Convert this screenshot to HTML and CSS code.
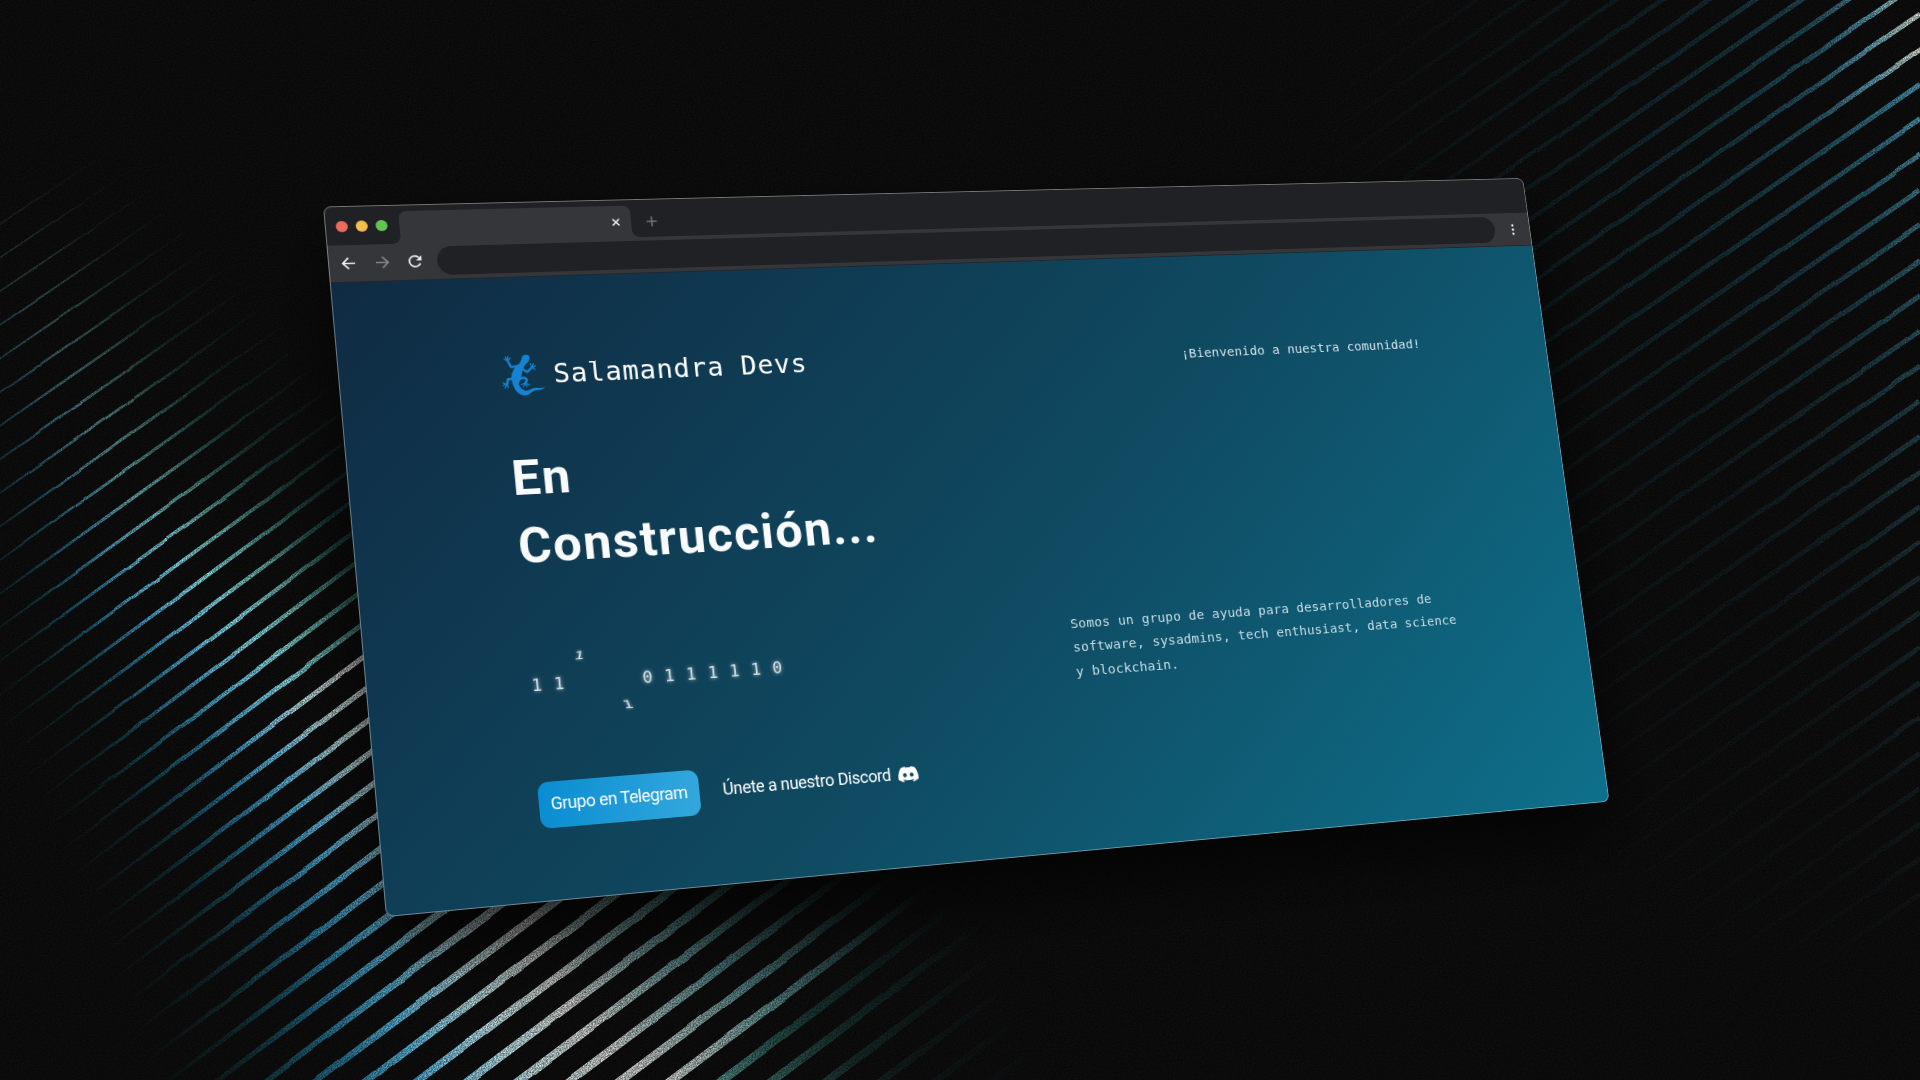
FILE: index.html
```html
<!DOCTYPE html>
<html lang="es">
<head>
<meta charset="utf-8">
<title>Salamandra Devs</title>
<link rel="stylesheet" href="styles.css">
</head>
<body>
<main class="stage">
  <svg class="backdrop" viewBox="0 0 1920 1080" aria-hidden="true">
    <defs>
      <filter id="rough" x="0" y="0" width="1920" height="1080" filterUnits="userSpaceOnUse" color-interpolation-filters="sRGB">
        <feTurbulence type="fractalNoise" baseFrequency="0.02" numOctaves="1" seed="4" result="wave"/>
        <feDisplacementMap in="SourceGraphic" in2="wave" scale="3" xChannelSelector="R" yChannelSelector="G" result="bent"/>
        <feTurbulence type="fractalNoise" baseFrequency="0.8" numOctaves="2" seed="9" result="speck"/>
        <feColorMatrix in="speck" values="0 0 0 0 1  0 0 0 0 1  0 0 0 0 1  2.2 0 0 0 -0.35" result="holes"/>
        <feComposite in="bent" in2="holes" operator="in" result="dotted"/>
        <feComposite in="bent" in2="dotted" operator="arithmetic" k1="0" k2="0.55" k3="0.45" k4="0"/>
      </filter>
      <filter id="grain" x="0" y="0" width="100%" height="100%" color-interpolation-filters="sRGB">
        <feTurbulence type="fractalNoise" baseFrequency="0.6" numOctaves="2" seed="2"/>
        <feColorMatrix values="0 0 0 0 0  0 0 0 0 0  0 0 0 0 0  1.6 0 0 0 -0.45"/>
      </filter>
    </defs>
    <g id="stripes" filter="url(#rough)"></g>
    <rect class="grain" width="1920" height="1080" filter="url(#grain)"/>
  </svg>

  <section class="window">
    <div class="tabstrip">
      <div class="lights"><i class="light red"></i><i class="light amber"></i><i class="light green"></i></div>
      <div class="tab">
        <svg class="close" viewBox="0 0 10 10"><path d="M1.5 1.5l7 7M8.5 1.5l-7 7"/></svg>
      </div>
      <svg class="plus" viewBox="0 0 12 12"><path d="M6 .5v11M.5 6h11"/></svg>
    </div>
    <div class="toolbar">
      <svg class="nav" viewBox="0 0 16 16"><path d="M15 8H2M8 1.8L1.8 8 8 14.2"/></svg>
      <svg class="nav dim" viewBox="0 0 16 16"><path d="M1 8h13M8 1.8L14.2 8 8 14.2"/></svg>
      <svg class="nav" viewBox="0 0 16 16"><path d="M13.6 10.2A6.1 6.1 0 1 1 12.4 3.7"/><path class="solid" d="M15.2 1v6H9.2z"/></svg>
      <div class="address"></div>
      <svg class="menu" viewBox="0 0 4 14"><circle cx="2" cy="2" r="1.5"/><circle cx="2" cy="7" r="1.5"/><circle cx="2" cy="12" r="1.5"/></svg>
    </div>
    <div class="page">
      <header class="header">
        <div class="brand">
          <svg class="lizard" viewBox="0 0 124 126">
            <path class="body" d="M83 9C84 0 65-2 61 8C59 16 57 22 51 28C40 37 30 50 27 66C26 76 28 84 31 96C36 112 48 125 62 125C78 124 82 112 96 109C106 108 116 110 123 98C114 105 104 102 94 102C80 104 74 112 64 110C54 106 48 98 48 88C50 80 56 70 58 60C60 46 66 34 76 26C82 20 82 14 83 9Z"/>
            <path class="limb" d="M52 36L27 38L19 20M59 44L74 54L88 40M36 74L17 75L13 91M48 78C55 69 70 70 71 79L66 88"/>
            <path class="toes" d="M19 19L9 15M19 19L13 8M19 19L20 7M19 19L27 11M88 40L84 29M88 40L93 29M88 40L99 35M88 40L97 46M13 91L1 86M13 91L1 94M13 91L7 102M13 91L17 101M66 88L55 91M66 88L60 99M66 88L71 98M66 88L78 93"/>
          </svg>
          <span class="brand-name">Salamandra Devs</span>
        </div>
        <p class="welcome">¡Bienvenido a nuestra comunidad!</p>
      </header>
      <div class="columns">
        <div class="left">
          <h1 class="title">En<br>Construcción...</h1>
          <div class="bits"><b>1</b><b>1</b><b class="up">1</b><b></b><b class="down">1</b><b>0</b><b>1</b><b>1</b><b>1</b><b>1</b><b>1</b><b>0</b></div>
          <div class="actions">
            <a class="telegram">Grupo en Telegram</a>
            <a class="discord"><span>Únete a nuestro Discord</span>
              <svg class="discord-icon" viewBox="0 0 24 18.2"><path d="M20.3 1.5A19.8 19.8 0 0 0 15.4 0c-.2.4-.5.9-.6 1.3a18.3 18.3 0 0 0-5.5 0C9.100.8 8.800.4 8.600 0a19.700 19.700 0 0 0-4.900 1.500C.5 6.200-.3 10.700.1 15.200a19.900 19.900 0 0 0 6 3c.5-.7.9-1.300 1.200-2a13 13 0 0 1-1.900-.9l.5-.4c3.900 1.800 8.200 1.800 12.100 0l.5.400c-.6.4-1.200.7-1.900.9.4.7.8 1.400 1.200 2a19.800 19.800 0 0 0 6-3c.5-5.200-.8-9.700-3.500-13.700zM8 12.500c-1.200 0-2.200-1.100-2.200-2.400S6.800 7.600 8 7.600s2.200 1.100 2.200 2.500S9.200 12.500 8 12.500zm8 0c-1.200 0-2.200-1.100-2.200-2.400s1-2.500 2.200-2.500 2.200 1.100 2.200 2.500-1 2.400-2.200 2.400z"/></svg>
            </a>
          </div>
        </div>
        <p class="about">Somos un grupo de ayuda para desarrolladores de software, sysadmins, tech enthusiast, data science y blockchain.</p>
      </div>
    </div>
  </section>
</main>
<script src="stripes.js"></script>
</body>
</html>
```
FILE: styles.css
```css
* { box-sizing: border-box; }
body { margin: 0; background: #0a0a0a; }
.stage { position: relative; width: 1920px; height: 1080px; overflow: hidden; background: #0e0e0e; }
.backdrop { display: block; width: 1920px; height: 1080px; }
.grain { opacity: .55; }

/* Browser window, tilted in perspective */
.window {
  position: absolute; left: 0; top: 0;
  width: 1360px; height: 740px;
  display: flex; flex-direction: column;
  border-radius: 8px; overflow: visible;
  transform-origin: 0 0;
  transform: matrix3d(1.032658, -.003389, 0, .0000986904, .070166, .924576, 0, -.0000387784, 0, 0, 1, 0, 323, 206.5, 0, 1);
  box-shadow: 0 40px 80px rgba(0, 0, 0, .75);
  font-family: Roboto, sans-serif;
}
.window::after {
  content: ""; position: absolute; inset: 0;
  border: 1.3px solid rgba(255, 255, 255, .38);
  border-radius: 8px;
}
.tabstrip {
  height: 42px; flex: none; display: flex; align-items: flex-end;
  background: #202124; border-radius: 8px 8px 0 0; padding-left: 11px;
}
.lights { display: flex; gap: 8px; width: 64px; height: 42px; align-items: center; padding-top: 1px; }
.light { width: 12px; height: 12px; border-radius: 50%; }
.red { background: #ed6a5e; }
.amber { background: #f5bd4f; }
.green { background: #61c554; }
.tab {
  position: relative; width: 240px; height: 35px;
  display: flex; align-items: center; justify-content: flex-end; padding-right: 11px;
  background: #35363a; border-radius: 8px 8px 0 0;
}
.tab::before, .tab::after { content: ""; position: absolute; bottom: 0; width: 8px; height: 8px; }
.tab::before { left: -8px; background: radial-gradient(circle at 0 0, transparent 7.5px, #35363a 8px); }
.tab::after { right: -8px; background: radial-gradient(circle at 100% 0, transparent 7.5px, #35363a 8px); }
svg path { fill: none; }
.close { width: 10px; height: 10px; stroke: #f1f1f1; stroke-width: 1.6; }
.plus { width: 12px; height: 12px; margin: 0 0 11px 16px; stroke: #75767a; stroke-width: 1.5; }
.toolbar {
  height: 40px; flex: none; display: flex; align-items: center;
  background: #35363a; padding: 0 20px 0 13px; border-bottom: 1px solid #24262a;
}
.nav { width: 15px; height: 15px; margin-right: 18.5px; stroke: #f1f1f1; stroke-width: 1.8; }
.nav.dim { stroke: #85868a; }
.nav .solid { fill: #f1f1f1; stroke: none; }
.nav + .address { margin-left: -4px; }
.address { width: 1205px; height: 31px; border-radius: 16px; background: #202124; }
.menu { width: 4px; height: 14px; margin-left: auto; fill: #f1f1f1; }

.page {
  flex: 1; padding: 83px 157px 0 165px;
  background: linear-gradient(135deg, #0f2b43 0%, #0f4a61 52%, #0e708b 100%);
  border-radius: 0 0 8px 8px;
}
.header { display: flex; justify-content: space-between; height: 44px; align-items: center; }
.brand { display: flex; align-items: center; gap: 9px; }
.lizard { width: 44px; height: 45px; transform: rotate(2deg); }
.lizard .body { fill: #1583cf; }
.lizard .limb, .lizard .toes { stroke: #1583cf; stroke-width: 7; stroke-linejoin: round; stroke-linecap: round; }
.lizard .toes { stroke-width: 3.5; }
.brand-name, .welcome, .about, .bits { font-family: "DejaVu Sans Mono", monospace; }
.brand-name { font-size: 28.5px; letter-spacing: .85px; color: #fff; line-height: 44px; margin-top: 1px; }
.welcome { margin: 14px 1px 0 0; font-size: 14.8px; letter-spacing: .15px; line-height: 24px; color: #d3e2ea; }
.columns { display: flex; justify-content: space-between; }
.title {
  margin: 53px 0 0; font-size: 52px; line-height: 72px; font-weight: 700;
  letter-spacing: 1.6px; color: #f8fafc;
}
.bits { display: flex; margin: 95px 0 0 -2px; height: 30px; }
.bits b {
  width: 22.8px; font-size: 17.5px; line-height: 30px; font-weight: 400; color: #d3dfe4;
  text-shadow: 0 0 4px rgba(255, 255, 255, .7); padding-left: 2px;
}
.bits .up { transform: translateY(-28px) skewX(-14deg) scaleY(.65); }
.bits .down { transform: translateY(27px) skewX(14deg) scaleY(.68); }
.actions { display: flex; margin: 86px 0 0 -4px; align-items: flex-start; }
.telegram {
  width: 164.5px; height: 47.5px; border-radius: 11px; text-align: center;
  background: linear-gradient(100deg, #088cd1, #34a8dd);
  color: #fff; font-size: 17.6px; line-height: 46px; letter-spacing: -.45px;
}
.discord {
  display: flex; align-items: center; margin-left: 25px; gap: 8px; height: 46px;
  color: #fff; font-size: 17.6px; letter-spacing: -.34px;
}
.discord-icon { width: 22px; height: 17px; }
.discord-icon path { fill: #fff; }
.about {
  width: 460px; margin: 269px -4px 0 0; font-size: 14.8px; letter-spacing: .18px;
  line-height: 26.4px; color: #c9dde6;
}
```
FILE: stripes.js
```js
// Draws the two fans of light streaks behind the window.
const NS = "http://www.w3.org/2000/svg";
const group = document.getElementById("stripes");
let count = 0;

function lerp(table, x) {
  for (let i = 1; i < table.length; i++) {
    const [x0, y0] = table[i - 1], [x1, y1] = table[i];
    if (x <= x1) return y0 + (y1 - y0) * Math.max(0, (x - x0) / (x1 - x0));
  }
  return table[table.length - 1][1];
}

function streak(x0, y0, x1, y1, widths, stops, opacity) {
  const id = "s" + count++;
  const g = document.createElementNS(NS, "linearGradient");
  g.id = id;
  g.setAttribute("gradientUnits", "userSpaceOnUse");
  Object.entries({ x1: x0, y1: y0, x2: x1, y2: y1 }).forEach(([k, v]) => g.setAttribute(k, v));
  stops.forEach(([offset, color, alpha]) => {
    const s = document.createElementNS(NS, "stop");
    s.setAttribute("offset", offset);
    s.setAttribute("stop-color", color);
    s.setAttribute("stop-opacity", alpha);
    g.append(s);
  });
  const p = document.createElementNS(NS, "polygon");
  const len = Math.hypot(x1 - x0, y1 - y0), nx = -(y1 - y0) / len / 2, ny = (x1 - x0) / len / 2;
  const side = sign => widths.map((w, i) => {
    const t = i / (widths.length - 1);
    return `${x0 + (x1 - x0) * t + nx * w * sign},${y0 + (y1 - y0) * t + ny * w * sign}`;
  });
  p.setAttribute("points", side(1).concat(side(-1).reverse()).join(" "));
  p.setAttribute("fill", `url(#${id})`);
  p.setAttribute("opacity", opacity);
  group.append(g, p);
}

// Left fan: c is the height at which a streak meets the left edge.
for (let c = 224; c < 1950; c += c < 1090 ? 33.6 : c < 1280 ? 36.5 : c < 1640 ? 38 : 41) {
  const slope = lerp([[200, .66], [600, .72], [850, .75], [2000, .75]], c);
  const peak = lerp([[226, 0], [450, 80], [620, 145], [820, 250], [1025, 350], [1200, 430], [1350, 470], [1500, 530], [1650, 660], [1950, 900]], c);
  const half = lerp([[226, 150], [500, 180], [800, 215], [1100, 260], [1500, 340], [1650, 330], [1950, 200]], c);
  const power = lerp([[226, .12], [330, .32], [560, .65], [700, 1], [1600, 1], [1680, .7], [1740, .42], [1840, .25], [1950, .08]], c);
  const w = lerp([[226, 1.6], [620, 3.4], [850, 4.6], [1050, 6], [1300, 8.2], [1600, 8.6], [1950, 6.5]], c);
  const white = c > 900 && c < 1600;
  const a = peak - half, b = peak + half;
  streak(a, c - slope * a, b, c - slope * b, [w * .4, w * .75, w, w, w * .75], [
    [0, "#0b4a52", 0], [.14, "#14525e", .4], [.3, "#2f8cb4", .85], [.4, "#5cbee4", 1],
    [.5, white ? "#c4ecf2" : "#8ceaf4", 1], [.6, white ? "#dde0dc" : "#7cd8d0", white ? 1 : .85],
    [.76, white ? "#6aa6aa" : "#2b7a74", white ? .8 : .45], [1, "#0b4a52", 0]
  ], power);
}

// Right fan: c is the height at which a streak meets the right edge.
for (let c = -370; c < 920; c += c < 0 ? 32 : 35.2) {
  const reach = lerp([[-370, 640], [0, 620], [400, 500], [700, 330], [920, 180]], c);
  const power = lerp([[-370, .15], [-100, .85], [10, 1], [100, .9], [250, .55], [420, .36], [600, .22], [900, .06]], c);
  const hot = c > -120 && c < 60;
  const mid = lerp([[-370, .6], [-60, .4], [300, .4], [900, .6]], c);
  streak(1920 - reach, c + .69 * reach, 1920, c, [3, 4.5, 5], [
    [0, "#0b3a40", 0], [.35, "#12404a", mid], [.65, "#1d5060", .65], [.82, "#2e7086", .75],
    [.92, hot ? "#6cb8d4" : "#3b8ca8", .9], [1, hot ? "#e8f4e4" : "#5cb4d0", 1]
  ], power);
}
```
